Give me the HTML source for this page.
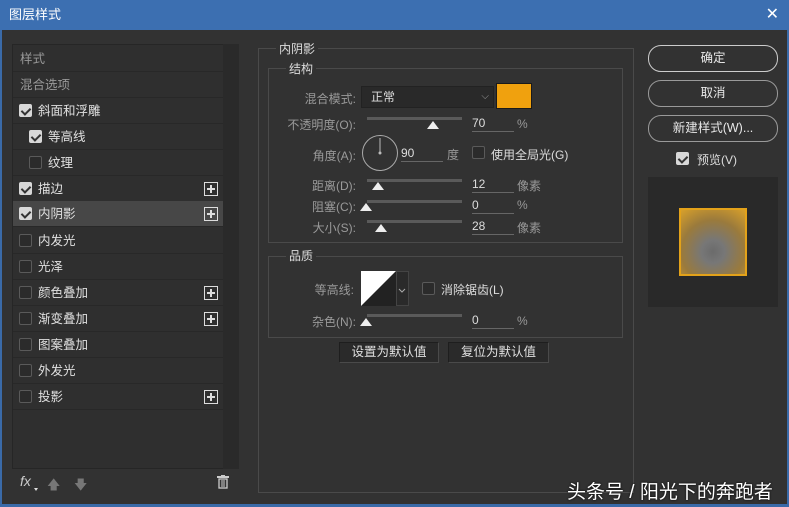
<!DOCTYPE html>
<html><head><meta charset="utf-8"><style>
*{margin:0;padding:0;box-sizing:border-box}
body{width:789px;height:507px;background:#535353;font-family:"Liberation Sans","Noto Sans CJK SC",sans-serif;font-size:12px;color:#c8c8c8;position:relative;overflow:hidden}
.win{position:absolute;left:0;top:0;width:789px;height:507px;background:#323232;border-left:2px solid #3a6aa8;border-right:2px solid #3a6aa8;border-bottom:3px solid #3a6aa8}
.title{position:absolute;left:0;top:0;width:789px;height:30px;background:#3c6fb1;color:#fff;font-size:13px;line-height:30px;padding-left:9px}
.close{position:absolute;right:10px;top:0;font-size:16px;color:#fff}
.a{position:absolute;white-space:nowrap}
.list{position:absolute;left:12px;top:44px;width:227px;height:425px;border:1px solid #262626;background:#2f2f2f}
.sb{position:absolute;left:223px;top:44px;width:16px;height:425px;background:#2a2a2a}
.row{position:absolute;left:13px;width:210px;height:26px;border-bottom:1px solid #282828;line-height:26px;color:#e0e0e0;font-size:12.5px}
.cb{position:absolute;width:13px;height:13px;border:1px solid #5a5a5a;background:#2b2b2b;border-radius:2px}
.cb.on{background:#d8d8d8;border-color:#d8d8d8}
.cb.on:after{content:"";position:absolute;left:3px;top:1px;width:4px;height:7px;border:solid #333;border-width:0 2px 2px 0;transform:rotate(45deg)}
.plus{position:absolute;left:191px;top:6px;width:14px;height:14px;border:1px solid #ddd}
.plus:before{content:"";position:absolute;left:2px;top:5px;width:8px;height:2px;background:#ddd}
.plus:after{content:"";position:absolute;left:5px;top:2px;width:2px;height:8px;background:#ddd}
.box{position:absolute;border:1px solid #4a4a4a}
.lbl{position:absolute;text-align:right;color:#9a9a9a;font-size:12px}
.track{position:absolute;height:3px;background:#5a5a5a;width:95px;left:367px}
.thumb{position:absolute;width:0;height:0;border-left:6px solid transparent;border-right:6px solid transparent;border-bottom:8px solid #eee}
.val{position:absolute;left:472px;width:42px;border-bottom:1px solid #666;color:#ddd;font-size:12px;height:16px}
.btn{position:absolute;left:648px;width:130px;height:27px;border:1px solid #9a9a9a;border-radius:13px;text-align:center;line-height:25px;color:#e8e8e8;font-size:12.5px}
.pb{position:absolute;height:21px;background:#2a2a2a;border:1px solid #1e1e1e;border-right-color:#4a4a4a;border-bottom-color:#4a4a4a;text-align:center;line-height:19px;color:#e0e0e0;font-size:12.5px}
</style></head><body>
<div class="win"></div>
<div class="title">图层样式<span class="close">✕</span></div>

<div class="list"></div>
<div class="sb"></div>
<div class="row" style="top:46px;padding-left:7px;color:#999">样式</div>
<div class="row" style="top:72px;padding-left:7px;color:#999">混合选项</div>
<div class="row" style="top:98px;padding-left:25px"><span class="cb on" style="left:6px;top:6px"></span>斜面和浮雕</div>
<div class="row" style="top:124px;padding-left:35px"><span class="cb on" style="left:16px;top:6px"></span>等高线</div>
<div class="row" style="top:150px;padding-left:35px"><span class="cb" style="left:16px;top:6px"></span>纹理</div>
<div class="row" style="top:176px;padding-left:25px"><span class="cb on" style="left:6px;top:6px"></span>描边<span class="plus"></span></div>
<div class="row" style="top:201px;padding-left:25px;background:#474747"><span class="cb on" style="left:6px;top:6px"></span>内阴影<span class="plus"></span></div>
<div class="row" style="top:228px;padding-left:25px"><span class="cb" style="left:6px;top:6px"></span>内发光</div>
<div class="row" style="top:254px;padding-left:25px"><span class="cb" style="left:6px;top:6px"></span>光泽</div>
<div class="row" style="top:280px;padding-left:25px"><span class="cb" style="left:6px;top:6px"></span>颜色叠加<span class="plus"></span></div>
<div class="row" style="top:306px;padding-left:25px"><span class="cb" style="left:6px;top:6px"></span>渐变叠加<span class="plus"></span></div>
<div class="row" style="top:332px;padding-left:25px"><span class="cb" style="left:6px;top:6px"></span>图案叠加</div>
<div class="row" style="top:358px;padding-left:25px"><span class="cb" style="left:6px;top:6px"></span>外发光</div>
<div class="row" style="top:384px;padding-left:25px"><span class="cb" style="left:6px;top:6px"></span>投影<span class="plus"></span></div>
<div class="a" style="left:20px;top:473px;font-style:italic;color:#ccc;font-size:14px">fx</div>
<div class="a" style="left:34px;top:488px;width:0;height:0;border-left:2px solid transparent;border-right:2px solid transparent;border-top:3px solid #ddd"></div>
<div class="a" style="left:47px;top:476px;color:#777;font-size:13px">🡅</div>
<div class="a" style="left:74px;top:476px;color:#777;font-size:13px">🡇</div>
<svg class="a" style="left:217px;top:475px" width="12" height="14"><rect x="0" y="1" width="12" height="2" fill="#ccc"/><rect x="4" y="0" width="4" height="2" fill="#ccc"/><rect x="2" y="4" width="8" height="9" fill="none" stroke="#ccc" stroke-width="1.3"/><path d="M5 5v7M7 5v7" stroke="#ccc"/></svg>

<div class="box" style="left:258px;top:48px;width:376px;height:445px"></div>
<div class="a" style="left:276px;top:40px;background:#323232;padding:0 3px;color:#ddd">内阴影</div>
<div class="box" style="left:268px;top:68px;width:355px;height:175px"></div>
<div class="a" style="left:286px;top:60px;background:#323232;padding:0 3px;color:#ddd">结构</div>

<div class="lbl" style="left:270px;width:86px;top:90px">混合模式:</div>
<div class="a" style="left:361px;top:86px;width:133px;height:22px;background:#292929;border:1px solid #222;color:#ddd;line-height:20px;padding-left:9px">正常<span style="position:absolute;right:4px;top:0;color:#999;font-size:10px">⌵</span></div>
<div class="a" style="left:496px;top:83px;width:36px;height:26px;background:#f0a10e;border:1px solid #1a1a1a"></div>

<div class="lbl" style="left:270px;width:86px;top:116px">不透明度(O):</div>
<div class="track" style="top:117px"></div><div class="thumb a" style="left:427px;top:121px"></div>
<div class="val" style="top:116px">70</div><div class="a" style="left:517px;top:117px;color:#999">%</div>

<div class="lbl" style="left:270px;width:86px;top:147px">角度(A):</div>
<svg class="a" style="left:361px;top:134px" width="38" height="38"><circle cx="19" cy="19" r="17.5" fill="none" stroke="#aaa" stroke-width="1"/><line x1="19" y1="19" x2="19" y2="4" stroke="#bbb"/><circle cx="19" cy="19" r="1.5" fill="#bbb"/></svg>
<div class="val" style="left:401px;top:146px">90</div><div class="a" style="left:447px;top:146px;color:#999">度</div>
<span class="cb a" style="left:472px;top:146px"></span><div class="a" style="left:491px;top:146px;color:#ddd">使用全局光(G)</div>

<div class="lbl" style="left:270px;width:86px;top:177px">距离(D):</div>
<div class="track" style="top:179px"></div><div class="thumb a" style="left:372px;top:182px"></div>
<div class="val" style="top:177px">12</div><div class="a" style="left:517px;top:177px;color:#999">像素</div>
<div class="lbl" style="left:270px;width:86px;top:198px">阻塞(C):</div>
<div class="track" style="top:200px"></div><div class="thumb a" style="left:360px;top:203px"></div>
<div class="val" style="top:198px">0</div><div class="a" style="left:517px;top:198px;color:#999">%</div>
<div class="lbl" style="left:270px;width:86px;top:219px">大小(S):</div>
<div class="track" style="top:220px"></div><div class="thumb a" style="left:375px;top:224px"></div>
<div class="val" style="top:219px">28</div><div class="a" style="left:517px;top:219px;color:#999">像素</div>

<div class="box" style="left:268px;top:256px;width:355px;height:82px"></div>
<div class="a" style="left:286px;top:247px;background:#323232;padding:0 3px;color:#ddd">品质</div>
<div class="lbl" style="left:270px;width:84px;top:281px">等高线:</div>
<svg class="a" style="left:361px;top:271px" width="48" height="35"><rect x="0" y="0" width="35" height="35" fill="#222"/><path d="M0 0H35L0 35Z" fill="#fff"/><rect x="35.5" y="0.5" width="12" height="34" fill="#2a2a2a" stroke="#444"/><path d="M38 18l3 3 3-3" stroke="#aaa" fill="none"/></svg>
<span class="cb a" style="left:422px;top:282px"></span><div class="a" style="left:441px;top:281px;color:#ddd">消除锯齿(L)</div>
<div class="lbl" style="left:270px;width:86px;top:313px">杂色(N):</div>
<div class="track" style="top:314px"></div><div class="thumb a" style="left:360px;top:318px"></div>
<div class="val" style="top:313px">0</div><div class="a" style="left:517px;top:314px;color:#999">%</div>

<div class="pb" style="left:339px;top:342px;width:100px">设置为默认值</div>
<div class="pb" style="left:448px;top:342px;width:101px">复位为默认值</div>

<div class="btn" style="top:45px;border-color:#ccc">确定</div>
<div class="btn" style="top:80px">取消</div>
<div class="btn" style="top:115px">新建样式(W)...</div>
<span class="cb on a" style="left:676px;top:152px"></span><div class="a" style="left:697px;top:151px;color:#ddd">预览(V)</div>
<div class="a" style="left:648px;top:177px;width:130px;height:130px;background:#292929"></div>
<div class="a" style="left:679px;top:208px;width:68px;height:68px;border:2px solid #e3a21a;background:radial-gradient(circle at 50% 65%,#6b6b6b 0%,#777 22%,#9a7a3c 60%,#d8a02a 100%)"></div>

<div class="a" style="left:567px;top:477px;color:#fff;font-size:19px;text-shadow:0 0 2px #000">头条号 / 阳光下的奔跑者</div>
</body></html>
